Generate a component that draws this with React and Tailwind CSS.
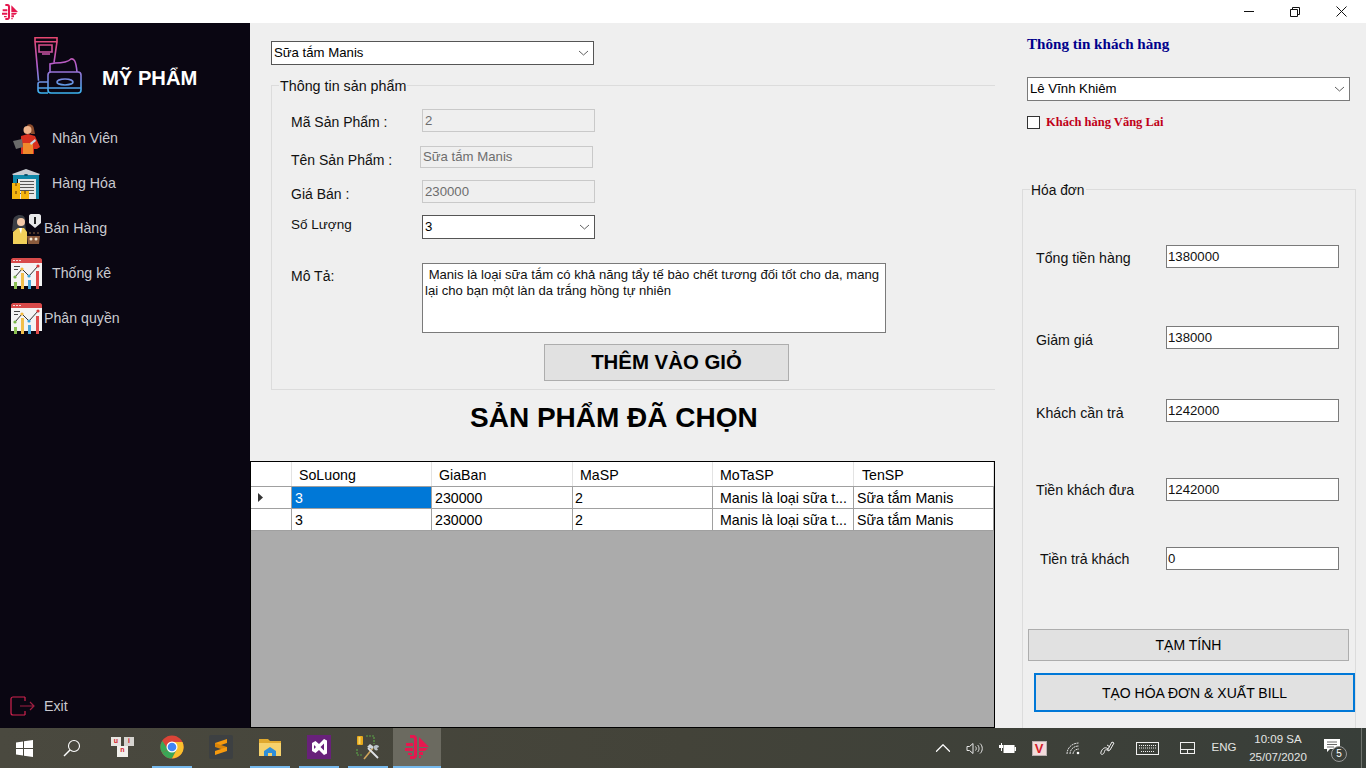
import React from "react";
import { ChevronUp } from "lucide-react";

const grad = "bg-[#e1e1e1] border border-[#adadad] text-black";

function Chevron() {
  return (
    <svg width="11" height="6" viewBox="0 0 11 6" className="shrink-0">
      <path d="M1 1l4.500 4L10 1" fill="none" stroke="#606060" strokeWidth="1" />
    </svg>
  );
}

function Combo({ value, className }) {
  return (
    <div className={"flex items-center justify-between bg-white border border-[#7a7a7a] pl-[2px] pr-[4px] text-[13.2px] text-black " + className}>
      <span>{value}</span>
      <Chevron />
    </div>
  );
}

function LockedField({ value, className }) {
  return (
    <div className={"flex items-center bg-[#efefef] border border-[#c9c9c9] pl-[2px] text-[13.2px] text-[#6d6d6d] " + className}>
      {value}
    </div>
  );
}

function AppMark({ size = 16 }) {
  return (
    <svg width={size} height={size} viewBox="0 0 24 24">
      <g fill="#e5184f">
        <path d="M5 0h3c3 0 4 2 4 4v16c0 2-1 4-4 4H5v-3h3c.5 0 1-.5 1-1V4c0-.5-.5-1-1-1H5z" />
        <path d="M1 8h7v3H1zM0 13h8v3H0zM3 18h4v2H3z" />
        <path d="M14 2l10 10H14zM14 13h9l-3 3h-6zM14 17h4v3h-4zM14 21h2v2h-2z" />
      </g>
    </svg>
  );
}

function BrandIcon() {
  return (
    <svg width="49" height="57" viewBox="0 0 49 57" fill="none" strokeWidth="1.600">
      <defs>
        <linearGradient id="cosm" gradientUnits="userSpaceOnUse" x1="0" y1="0" x2="0" y2="57">
          <stop offset="0" stopColor="#e8476e" />
          <stop offset="0.5" stopColor="#b45fd0" />
          <stop offset="1" stopColor="#38b6f0" />
        </linearGradient>
      </defs>
      <g stroke="url(#cosm)">
        <path d="M1 .7h22v4H1zM1 4.700l3.500 39M23 4.700l-3 21" />
        <path d="M5 8h13v7H5zM8 17h8" />
        <path d="M16 35v-8l5-1c5 0 12 0 16-4 3-1 5 2 6 13" />
        <path d="M14 38c0-2 1-3 3-3h27c2 0 3 1 3 3v15c0 2-1 3-3 3H17c-2 0-3-1-3-3z" />
        <path d="M14 45H6c-1.500 0-2 1-2 2v6c0 2 1 3 3 3h7M4 51h43" />
        <ellipse cx="31" cy="45" rx="8" ry="3" />
      </g>
    </svg>
  );
}

function PersonIcon() {
  return (
    <svg width="30" height="32" viewBox="0 0 30 32">
      <path d="M15 2c4-2 7 1 7 4l1 5h-4z" fill="#8a4b2c" />
      <circle cx="15.500" cy="7" r="4" fill="#f0b48c" />
      <path d="M9 13l7-2 7 2 5 11-3 2h-3v5H9v-7z" fill="#d8301f" />
      <path d="M11 20h10v11H11z" fill="#f08a2c" />
      <path d="M1 18l9-2 1 8-7 2z" fill="#6a6a6a" />
      <path d="M18 20l5-4 1 2-5 4z" fill="#c9d8e4" />
    </svg>
  );
}

function WarehouseIcon() {
  return (
    <svg width="30" height="30" viewBox="0 0 30 30">
      <path d="M1 5L15 0l14 5-1 1H2z" fill="#c9ccd1" />
      <path d="M2 6h26v24h-3V10H6v9H2z" fill="#0f87a8" />
      <ellipse cx="15" cy="6" rx="2" ry="1" fill="#0a4d66" />
      <path d="M7 10h18v20H7z" fill="#e6e6e6" />
      <path d="M9 12h14v1H9zM9 15h14v1H9zM9 18h14v1H9zM9 21h14v1H9zM9 24h14v1H9z" fill="#555" />
      <path d="M1 14h8v8H1zM1 22h8v8H1zM10 22h8v8h-8z" fill="#f5b50f" />
      <path d="M4 14h2v3H4zM4 22h2v3H4zM13 22h2v3h-2z" fill="#a86f0b" />
    </svg>
  );
}

function SellerIcon() {
  return (
    <svg width="30" height="31" viewBox="0 0 30 31">
      <path d="M2 9c0-5 3-7 7-7s6 3 5 7l1 9H1z" fill="#3a3d44" />
      <circle cx="10" cy="9" r="4" fill="#f4c9a8" />
      <path d="M2 19l5-4h6l3 4v12H2z" fill="#f1cf5a" />
      <path d="M8 15h3l-1 6z" fill="#fff" />
      <path d="M19 1h9c1 0 2 1 2 2v7l-6 5-6-5V3c0-1 1-2 2-2z" fill="#e8e8ea" />
      <path d="M23 4h2v7h-2z" fill="#222" />
      <path d="M16 23h13l-1 8H17z" fill="#8a5a3c" />
      <path d="M18 19h2v2h-2zM22 19h2v2h-2zM26 19h2v2h-2z" fill="#4a3428" />
      <circle cx="20" cy="26" r="1.500" fill="#f2e7d4" />
      <circle cx="25" cy="26" r="1.500" fill="#f2e7d4" />
    </svg>
  );
}

function ChartIcon() {
  return (
    <svg width="31" height="31" viewBox="0 0 31 31">
      <path d="M0 2c0-1 1-2 2-2h27c1 0 2 1 2 2v3H0z" fill="#d84a4a" />
      <path d="M2 2h2v1H2zM5 2h2v1H5zM8 2h2v1H8z" fill="#f2d8d8" />
      <path d="M0 5h31v23H0z" fill="#f4f4f4" />
      <path d="M3 8h6v1H3zM3 11h4v1H3z" fill="#444" />
      <path d="M4 19l7-8 7 7 9-10" fill="none" stroke="#333" strokeWidth="1" />
      <circle cx="4" cy="19" r="1.600" fill="#7ab648" />
      <circle cx="11" cy="11" r="1.600" fill="#f2b83b" />
      <circle cx="18" cy="18" r="1.600" fill="#38a3d8" />
      <circle cx="27" cy="8" r="1.600" fill="#d83a3a" />
      <path d="M3 24h3v7H3z" fill="#8cc152" />
      <path d="M10 15h3v16h-3z" fill="#f2bf4b" />
      <path d="M17 22h3v9h-3z" fill="#4ba9dc" />
      <path d="M25 13h3v18h-3z" fill="#e14b4b" />
    </svg>
  );
}

function ExitIcon() {
  return (
    <svg width="25" height="20" viewBox="0 0 25 20" fill="none" strokeWidth="1.200">
      <path d="M15 1H3C2 1 1 2 1 3v14c0 1 1 2 2 2h12M15 1v4M15 15v4" stroke="#d2234f" />
      <path d="M10 10h14M20 6l4 4-4 4" stroke="#a01f42" />
    </svg>
  );
}

const menu = [
  { label: "Nhân Viên", icon: <PersonIcon />, iconClass: "ml-[12px] w-[29px]", textClass: "ml-[11px]" },
  { label: "Hàng Hóa", icon: <WarehouseIcon />, iconClass: "ml-[11px] w-[30px]", textClass: "ml-[11px]" },
  { label: "Bán Hàng", icon: <SellerIcon />, iconClass: "ml-[11px] w-[30px]", textClass: "ml-[3px]" },
  { label: "Thống kê", icon: <ChartIcon />, iconClass: "ml-[11px] w-[30px]", textClass: "ml-[11px]" },
  { label: "Phân quyền", icon: <ChartIcon />, iconClass: "ml-[11px] w-[30px]", textClass: "ml-[3px]" },
];

function Sidebar() {
  return (
    <aside className="w-[250px] shrink-0 flex flex-col bg-[#0a0612] text-[#c9c9cf] text-[14.2px]">
      <div className="flex h-[93px] pl-[34px] pt-[14px]">
        <BrandIcon />
        <span className="ml-[19px] mt-[29px] text-[20.2px] leading-[24px] font-bold text-white">MỸ PHẨM</span>
      </div>
      {menu.map((item) => (
        <div key={item.label} className="flex items-center h-[45px]">
          <div className={"shrink-0 " + item.iconClass}>{item.icon}</div>
          <span className={item.textClass}>{item.label}</span>
        </div>
      ))}
      <div className="mt-auto mb-[11px] flex items-center pl-[10px]">
        <ExitIcon />
        <span className="ml-[9px]">Exit</span>
      </div>
    </aside>
  );
}

const columns = [
  { name: "SoLuong", w: "w-[140px]", pad: "pl-[7px]", cell: "pl-[3px]" },
  { name: "GiaBan", w: "w-[141px]", pad: "pl-[7px]", cell: "pl-[3px]" },
  { name: "MaSP", w: "w-[140px]", pad: "pl-[7px]", cell: "pl-[2px]" },
  { name: "MoTaSP", w: "w-[141px]", pad: "pl-[7px]", cell: "pl-[7px]" },
  { name: "TenSP", w: "w-[140px]", pad: "pl-[8px]", cell: "pl-[3px]" },
];
const rows = [
  ["3", "230000", "2", "Manis là loại sữa t...", "Sữa tắm Manis"],
  ["3", "230000", "2", "Manis là loại sữa t...", "Sữa tắm Manis"],
];

function CartGrid() {
  return (
    <div className="flex-1 bg-[#ababab] border border-black text-[14.2px] text-black">
      <div className="flex h-[25px] bg-white border-b border-[#a0a0a0]">
        <div className="w-[41px] border-r border-[#e3e3e3]" />
        {columns.map((c) => (
          <div key={c.name} className={"flex items-center pt-[3px] border-r border-[#e3e3e3] " + c.w + " " + c.pad}>
            {c.name}
          </div>
        ))}
      </div>
      {rows.map((row, i) => (
        <div key={i} className="flex h-[22px] bg-white border-b border-[#a0a0a0]">
          <div className="w-[41px] flex items-center pl-[7px] border-r border-[#a0a0a0]">
            {i === 0 && (
              <svg width="5" height="9" viewBox="0 0 5 9">
                <path d="M0 0l5 4.500L0 9z" fill="#333" />
              </svg>
            )}
          </div>
          {row.map((cell, j) => (
            <div
              key={j}
              className={
                "flex items-center pt-[2px] whitespace-nowrap border-r border-[#a0a0a0] " +
                columns[j].w +
                " " +
                columns[j].cell +
                (i === 0 && j === 0 ? " bg-[#0078d7] text-white" : "")
              }
            >
              {cell}
            </div>
          ))}
        </div>
      ))}
    </div>
  );
}

function ProductPanel() {
  return (
    <main className="w-[745px] shrink-0 flex flex-col bg-[#efefef] text-[14px] text-[#111]">
      <div className="pl-[21px] pt-[18px]">
        <Combo value="Sữa tắm Manis" className="w-[323px] h-[24px] border-[#555]" />
        <fieldset className="mt-[12px] border-t border-l border-b border-[#dcdcdc] pl-[19px] pb-[8px]">
          <legend className="-ml-[12px] px-[1px] pt-[1px] h-[17px] leading-[17px] text-[14.3px]">Thông tin sản phẩm</legend>
          <div className="flex items-start mt-[15px] h-[23px]">
            <span className="w-[131px] pt-[3px]">Mã Sản Phẩm :</span>
            <LockedField value="2" className="w-[173px] h-[23px]" />
          </div>
          <div className="flex items-start mt-[14px] h-[22px]">
            <span className="w-[129px] pt-[4px]">Tên Sản Phẩm :</span>
            <LockedField value="Sữa tắm Manis" className="w-[173px] h-[22px]" />
          </div>
          <div className="flex items-start mt-[12px] h-[23px]">
            <span className="w-[131px] pt-[4px]">Giá Bán :</span>
            <LockedField value="230000" className="w-[173px] h-[23px]" />
          </div>
          <div className="flex items-start mt-[12px] h-[24px]">
            <span className="w-[131px] text-[13.5px]">Số Lượng</span>
            <Combo value="3" className="w-[173px] h-[24px] border-[#555]" />
          </div>
          <div className="flex items-start mt-[24px]">
            <span className="w-[131px] pt-[3px]">Mô Tả:</span>
            <div className="w-[464px] h-[70px] bg-white border border-[#7a7a7a] pl-[2px] pt-[3px] leading-[16px] text-[13.1px]">
              &nbsp;Manis là loại sữa tắm có khả năng tẩy tế bào chết tương đối tốt cho da, mang lại cho bạn một làn da trắng hồng tự nhiên
            </div>
          </div>
          <button className={"block ml-[253px] mt-[11px] w-[245px] h-[37px] text-[20.4px] font-bold " + grad}>
            THÊM VÀO GIỎ
          </button>
        </fieldset>
      </div>
      <h1 className="h-[71px] pl-[220px] text-[28px] leading-[56px] font-bold text-black whitespace-nowrap">
        SẢN PHẨM ĐÃ CHỌN
      </h1>
      <CartGrid />
    </main>
  );
}

const totals = [
  { label: "Tổng tiền hàng", value: "1380000", gap: "mt-[47px]", lab: "pt-[3px]", pad: "" },
  { label: "Giảm giá", value: "138000", gap: "mt-[58px]", lab: "pt-[4px]", pad: "" },
  { label: "Khách cần trả", value: "1242000", gap: "mt-[50px]", lab: "pt-[4px]", pad: "" },
  { label: "Tiền khách đưa", value: "1242000", gap: "mt-[56px]", lab: "pt-[2px]", pad: "" },
  { label: "Tiền trả khách", value: "0", gap: "mt-[46px]", lab: "pt-[2px]", pad: "pl-[4px]" },
];

function CustomerPanel() {
  return (
    <section className="flex-1 min-w-0 flex flex-col bg-[#efefef] text-[14.2px] text-[#111] overflow-hidden">
      <div className="pl-[32px]">
        <h2 className="pt-[12px] h-[54px] font-['Liberation_Serif',serif] text-[15.1px] leading-[18px] font-bold text-[#00008b]">
          Thông tin khách hàng
        </h2>
        <Combo value="Lê Vĩnh Khiêm" className="w-[323px] h-[24px]" />
        <div className="flex items-center mt-[15px] h-[13px]">
          <div className="w-[13px] h-[13px] border border-[#333] bg-white" />
          <span className="ml-[6px] font-['Liberation_Serif',serif] text-[12.5px] font-bold text-[#c00018] whitespace-nowrap">
            Khách hàng Vãng Lai
          </span>
        </div>
      </div>
      <fieldset className="flex-1 mt-[52px] ml-[27px] w-[333px] border-t border-l border-r border-[#dcdcdc] pl-[13px]">
        <legend className="-ml-[6px] px-[1px] pt-[1px] h-[17px] leading-[17px] text-[13.8px]">Hóa đơn</legend>
        {totals.map((t) => (
          <div key={t.label} className={"flex items-start h-[23px] " + t.gap}>
            <span className={"shrink-0 w-[130px] " + t.lab + " " + t.pad}>{t.label}</span>
            <div className="flex items-center w-[173px] h-[23px] bg-white border border-[#7a7a7a] pl-[1px] text-[13.2px] text-[#111]">
              {t.value}
            </div>
          </div>
        ))}
        <button className={"block -ml-[8px] mt-[59px] w-[321px] h-[32px] text-[14px] " + grad}>TẠM TÍNH</button>
        <button className="block -ml-[2px] mt-[12px] w-[321px] h-[39px] pt-[1px] text-[14px] bg-[#e1e1e1] border-2 border-[#0078d7] text-black">
          TẠO HÓA ĐƠN &amp; XUẤT BILL
        </button>
      </fieldset>
    </section>
  );
}

function WinLogo() {
  return (
    <svg width="17" height="17" viewBox="0 0 17 17" fill="#fff">
      <path d="M0 2.500l7-1v6.500H0zM8 1.300l9-1.300V8H8zM0 9h7v6.500l-7-1zM8 9h9v8l-9-1.300z" />
    </svg>
  );
}

function SearchIcon() {
  return (
    <svg width="18" height="18" viewBox="0 0 18 18" fill="none" stroke="#fff" strokeWidth="1.100">
      <circle cx="11" cy="7" r="5.500" />
      <path d="M7 11l-6 6" strokeWidth="1.500" />
    </svg>
  );
}

function KeysIcon() {
  return (
    <div className="relative w-[24px] h-[21px] text-[7px] leading-[8px] font-bold text-[#d4202c] text-center">
      <span className="absolute left-0 top-0 w-[10px] h-[9px] bg-[#e8e6e2]">u</span>
      <span className="absolute left-[13px] top-0 w-[10px] h-[9px] bg-[#d6d4d0]">i</span>
      <span className="absolute left-[6px] top-[9px] w-[11px] h-[11px] bg-[#f2f0ec]">n</span>
    </div>
  );
}

function ChromeIcon() {
  return (
    <svg width="24" height="24" viewBox="0 0 24 24">
      <circle cx="12" cy="12" r="11.500" fill="#db4437" />
      <path d="M12 12L2.100 18 A11.500 11.500 0 0 1 2.300 5.800 L7 13z" fill="#3aa757" />
      <path d="M2.100 18A11.500 11.500 0 0 0 12 23.500 l5.500-10-5.500-1z" fill="#3aa757" />
      <path d="M12 7h10.500A11.500 11.500 0 0 1 12 23.500L17 14z" fill="#fbc02d" />
      <circle cx="12" cy="12" r="5.500" fill="#fff" />
      <circle cx="12" cy="12" r="4.300" fill="#4285f4" />
    </svg>
  );
}

function SublimeIcon() {
  return (
    <svg width="24" height="24" viewBox="0 0 24 24">
      <rect width="24" height="24" rx="2" fill="#3d4042" />
      <path d="M18 4v4L6 12V8z" fill="#f79a0e" />
      <path d="M6 8l12 4v4L6 12z" fill="#d98409" />
      <path d="M18 12v4L6 20v-4z" fill="#f79a0e" />
    </svg>
  );
}

function FolderIcon() {
  return (
    <svg width="22" height="19" viewBox="0 0 22 19">
      <path d="M0 1h9l2 2h11v15H0z" fill="#e0a92f" />
      <path d="M0 5h22v13H0z" fill="#f6d26c" />
      <path d="M5 18v-5l6-4 6 4v5h-4v-3H9v3z" fill="#2f8fd8" />
    </svg>
  );
}

function VsIcon() {
  return (
    <svg width="24" height="24" viewBox="0 0 24 24">
      <rect width="24" height="24" fill="#68217a" />
      <path d="M17 4l3 1.500v13L17 20l-5-5-3.500 3L5 16v-8l3.500-2L12 9zM7 10v4l2-2zM17 8.500L13.500 12l3.500 3.500z" fill="#fff" fillRule="evenodd" />
    </svg>
  );
}

function ToolsIcon() {
  return (
    <svg width="25" height="25" viewBox="0 0 25 25">
      <rect x="1" y="1" width="6" height="9" rx="1" fill="#e8a91c" />
      <path d="M2.500 2h2v7h-2z" fill="#f6d76a" />
      <path d="M10 1h8v8M1 14v6h6" fill="none" stroke="#5aa046" strokeWidth="1.200" strokeDasharray="2 1" />
      <path d="M8 24l9-11" stroke="#d2a65a" strokeWidth="1.600" />
      <path d="M11 12l3-3 4 3-2 2z" fill="#cfd5db" />
      <path d="M22 23L12 13" stroke="#dfe3e8" strokeWidth="1.800" />
      <path d="M18 11c2-2 5-1 5 1l-2 1 1 2c-2 1-4 0-4-2z" fill="#b9c0c8" />
    </svg>
  );
}

const apps = [
  { icon: <KeysIcon />, open: false },
  { icon: <ChromeIcon />, open: true },
  { icon: <SublimeIcon />, open: false },
  { icon: <FolderIcon />, open: true },
  { icon: <VsIcon />, open: true },
  { icon: <ToolsIcon />, open: true },
];

function TrayIcon({ w, children }) {
  return <div className={"flex items-center justify-center h-full " + w}>{children}</div>;
}

function Taskbar() {
  return (
    <footer className="h-[40px] shrink-0 flex items-stretch bg-gradient-to-r from-[#4a493f] via-[#434339] to-[#383e39] text-[#e4e6e4]">
      <div className="w-12 flex items-center justify-center"><WinLogo /></div>
      <div className="w-12 flex items-center justify-center"><SearchIcon /></div>
      <div className="flex ml-[3px] gap-px">
        {apps.map((a, i) => (
          <div key={i} className="w-12 flex flex-col items-center">
            <div className="flex-1 flex items-center justify-center">{a.icon}</div>
            <div className={"w-10 h-[2px] " + (a.open ? "bg-[#76b9ed]" : "")} />
          </div>
        ))}
        <div className="w-12 flex flex-col bg-[#6b6a60]">
          <div className="flex-1 flex items-center justify-center"><AppMark size={24} /></div>
          <div className="h-[2px] bg-[#76b9ed]" />
        </div>
      </div>
      <div className="ml-auto flex items-center h-full">
        <TrayIcon w="w-[36px]"><ChevronUp size={26} strokeWidth={1.100} className="text-white" /></TrayIcon>
        <TrayIcon w="w-[26px]">
          <svg width="17" height="13" viewBox="0 0 17 13" fill="none" stroke="#e8e8e8" strokeWidth="1">
            <path d="M1 4.500h2.500L7 1.500v10L3.500 8.500H1zM9.500 4.500c1 1 1 3 0 4M11.500 3c2 1.500 2 5.500 0 7M14 1.500c3 2.500 3 7.500 0 10" />
          </svg>
        </TrayIcon>
        <TrayIcon w="w-[40px]">
          <svg width="17" height="11" viewBox="0 0 17 11">
            <path d="M0 2h2V0h1v2h1v3H3v3H2V5H0z" fill="#fff" />
            <rect x="5" y="2.500" width="10" height="7" fill="#fff" stroke="#fff" />
            <rect x="15.500" y="4" width="1.500" height="4" fill="#fff" />
          </svg>
        </TrayIcon>
        <TrayIcon w="w-[24px]">
          <span className="flex items-center justify-center w-[15px] h-[15px] bg-[#f3dcdc] border border-[#b9b0b0] text-[13px] leading-none font-bold text-[#d3202a]">V</span>
        </TrayIcon>
        <TrayIcon w="w-[44px]">
          <svg width="14" height="13" viewBox="0 0 14 13" fill="none" stroke="#e0e0e0" strokeWidth="1">
            <path d="M1 12C1 6 6 1 13 1M4 12c0-4 3-8 9-8M7 12c0-2 2-5 6-5" strokeDasharray="2 0.600" />
            <circle cx="12" cy="11" r="1.300" fill="#fff" stroke="none" />
          </svg>
        </TrayIcon>
        <TrayIcon w="w-[24px]">
          <svg width="16" height="16" viewBox="0 0 16 16" fill="none" stroke="#f0f0f0" strokeWidth="1">
            <path d="M9 9l4-7 2 1-4 7-2 1zM8 5l3 2M9 9C6 6 3 9 2 12s2 3 3 1 0-4 4-3" />
          </svg>
        </TrayIcon>
        <TrayIcon w="w-[56px]">
          <svg width="23" height="13" viewBox="0 0 23 13" fill="none" stroke="#f0f0f0">
            <rect x="0.500" y="0.500" width="22" height="12" />
            <path d="M3 3.500h17M3 6h17M5 9.500h13" strokeDasharray="1 1" />
          </svg>
        </TrayIcon>
        <TrayIcon w="w-[24px]">
          <svg width="15" height="12" viewBox="0 0 15 12" fill="none" stroke="#f0f0f0">
            <rect x="0.500" y="0.500" width="14" height="11" />
            <path d="M0 7.500h15M7.500 7.500V12" />
          </svg>
        </TrayIcon>
        <TrayIcon w="w-[50px]"><span className="text-[11.500px]">ENG</span></TrayIcon>
        <div className="w-[58px] flex flex-col items-center text-[11.500px] leading-[18px] whitespace-nowrap">
          <span>10:09 SA</span>
          <span>25/07/2020</span>
        </div>
        <div className="w-[54px] flex items-center justify-center h-full">
          <div className="relative w-[20px] h-[22px] mb-[2px]">
            <svg width="16" height="14" viewBox="0 0 16 14" className="mt-[3px]">
              <path d="M0 0h16v10H6l-3 3v-3H0z" fill="#fff" />
              <path d="M3 3h10M3 5.500h10M3 8h7" stroke="#444" strokeWidth="0.800" />
            </svg>
            <span className="absolute left-[7px] top-[10px] w-[16px] h-[16px] rounded-full border border-[#999] bg-[#3a3f3a] text-[10px] leading-[14px] text-center text-white">5</span>
          </div>
        </div>
        <div className="w-[5px] h-full border-l border-[#6f736e]" />
      </div>
    </footer>
  );
}

export default function App() {
  return (
    <div className="w-[1366px] h-[768px] flex flex-col overflow-hidden font-['Liberation_Sans',Arial,sans-serif]">
      <header className="h-[23px] shrink-0 flex items-center justify-between bg-white pl-[2px] pr-[2px]">
        <AppMark size={16} />
        <div className="flex h-full">
          <button className="w-[46px] flex items-center justify-center">
            <svg width="10" height="1" viewBox="0 0 10 1"><path d="M0 .5h10" stroke="#111" /></svg>
          </button>
          <button className="w-[46px] flex items-center justify-center">
            <svg width="10" height="10" viewBox="0 0 10 10" fill="none" stroke="#111">
              <path d="M.5 2.500h7v7h-7zM2.500 2.500v-2h7v7h-2" />
            </svg>
          </button>
          <button className="w-[46px] flex items-center justify-center">
            <svg width="11" height="11" viewBox="0 0 11 11" stroke="#111">
              <path d="M.5.500l10 10M10.500.500l-10 10" />
            </svg>
          </button>
        </div>
      </header>
      <div className="flex-1 min-h-0 flex">
        <Sidebar />
        <ProductPanel />
        <CustomerPanel />
      </div>
      <Taskbar />
    </div>
  );
}
